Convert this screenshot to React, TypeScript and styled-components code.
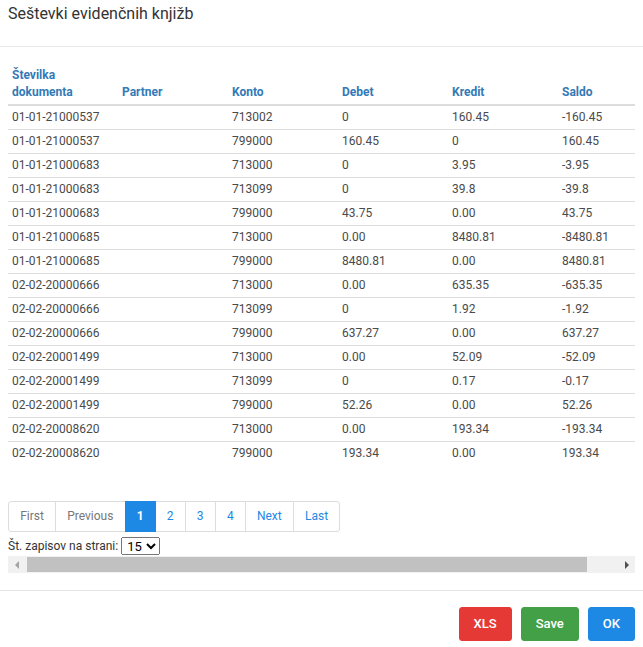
import React from "react";
import styled, { createGlobalStyle } from "styled-components";

const Global = createGlobalStyle`
  html, body { margin: 0; padding: 0; background: #fff; }
  body { font-family: Roboto, "Liberation Sans", Arial, sans-serif; color: #333; }
  * { box-sizing: border-box; }
`;

const Modal = styled.div`
  width: 643px;
  display: flex;
  flex-direction: column;
`;

const Header = styled.div`
  height: 47px;
  padding: 4px 8px 0;
  border-bottom: 1px solid #e9e9e9;
`;

const Title = styled.h4`
  margin: 0;
  font-size: 16px;
  line-height: 20px;
  font-weight: 400;
  color: #333;
`;

const Body = styled.div`
  padding: 17px 8px 17px;
`;

const Viewport = styled.div`
  overflow: hidden;
`;

const Inner = styled.div`
  width: 660px;
`;

const Table = styled.table`
  width: 660px;
  border-collapse: collapse;
  table-layout: fixed;
  font-size: 12px;
  margin-bottom: 36px;
`;

const Th = styled.th`
  width: 110px;
  text-align: left;
  vertical-align: bottom;
  padding: 3px 4px;
  line-height: 17px;
  font-weight: 700;
  color: #337ab7;
  border-bottom: 2px solid #ddd;
`;

const Tr = styled.tr`
  & + & td { border-top: 1px solid #ddd; }
`;

const Td = styled.td`
  padding: 3px 4px;
  line-height: 17px;
  color: #4a4a4a;
  white-space: nowrap;
`;

const Pager = styled.ul`
  display: flex;
  margin: 0;
  padding: 0;
  list-style: none;
`;

const PageItem = styled.li<{ $active?: boolean; $disabled?: boolean }>`
  padding: 6px 11.15px;
  font-size: 12px;
  line-height: 17px;
  border: 1px solid ${(p) => (p.$active ? "#1e88e5" : "#ddd")};
  margin-left: -1px;
  background: ${(p) => (p.$active ? "#1e88e5" : "#fff")};
  color: ${(p) => (p.$active ? "#fff" : p.$disabled ? "#777" : "#1e88e5")};
  font-weight: ${(p) => (p.$active ? 700 : 400)};
  position: relative;
  z-index: ${(p) => (p.$active ? 1 : 0)};
  &:first-child { margin-left: 0; border-radius: 3px 0 0 3px; }
  &:last-child { border-radius: 0 3px 3px 0; }
`;

const PerPage = styled.div`
  display: flex;
  align-items: center;
  gap: 3px;
  margin-top: 5px;
  font-size: 12px;
  line-height: 17px;
  color: #333;
  padding-bottom: 1px;
`;

const Select = styled.select`
  font-family: Roboto, "Liberation Sans", Arial, sans-serif;
  font-size: 13px;
  height: 18px;
  padding: 0 1px;
`;

const ScrollBar = styled.div`
  display: flex;
  align-items: center;
  height: 17px;
  background: #f1f1f1;
`;

const ArrowBtn = styled.div<{ $dir: "left" | "right"; $dim?: boolean }>`
  flex: 0 0 17px;
  height: 17px;
  display: flex;
  align-items: center;
  justify-content: center;
  &::before {
    content: "";
    width: 0;
    height: 0;
    border-top: 4px solid transparent;
    border-bottom: 4px solid transparent;
    ${(p) =>
      p.$dir === "left"
        ? `border-right: 4px solid ${p.$dim ? "#a3a3a3" : "#505050"};`
        : `border-left: 4px solid ${p.$dim ? "#a3a3a3" : "#505050"};`}
  }
`;

const ThumbTrack = styled.div`
  flex: 1;
  height: 17px;
  padding: 1px 2px;
  display: flex;
`;

const Thumb = styled.div`
  height: 15px;
  background: #c1c1c1;
`;

const Footer = styled.div`
  border-top: 1px solid #e5e5e5;
  padding: 16px 8px;
  display: flex;
  justify-content: flex-end;
  gap: 9px;
`;

const Btn = styled.button<{ $bg: string }>`
  font-family: Roboto, "Liberation Sans", Arial, sans-serif;
  font-size: 13px;
  font-weight: 500;
  line-height: 18px;
  padding: 7px 14px;
  color: #fff;
  background: ${(p) => p.$bg};
  border: 1px solid ${(p) => p.$bg};
  border-radius: 3px;
`;

const rows: string[][] = [
  ["01-01-21000537", "713002", "0", "160.45", "-160.45"],
  ["01-01-21000537", "799000", "160.45", "0", "160.45"],
  ["01-01-21000683", "713000", "0", "3.95", "-3.95"],
  ["01-01-21000683", "713099", "0", "39.8", "-39.8"],
  ["01-01-21000683", "799000", "43.75", "0.00", "43.75"],
  ["01-01-21000685", "713000", "0.00", "8480.81", "-8480.81"],
  ["01-01-21000685", "799000", "8480.81", "0.00", "8480.81"],
  ["02-02-20000666", "713000", "0.00", "635.35", "-635.35"],
  ["02-02-20000666", "713099", "0", "1.92", "-1.92"],
  ["02-02-20000666", "799000", "637.27", "0.00", "637.27"],
  ["02-02-20001499", "713000", "0.00", "52.09", "-52.09"],
  ["02-02-20001499", "713099", "0", "0.17", "-0.17"],
  ["02-02-20001499", "799000", "52.26", "0.00", "52.26"],
  ["02-02-20008620", "713000", "0.00", "193.34", "-193.34"],
  ["02-02-20008620", "799000", "193.34", "0.00", "193.34"],
];

const visibleRatio = 627 / 660;

export default function App() {
  return (
    <>
      <Global />
      <Modal>
        <Header>
          <Title>Seštevki evidenčnih knjižb</Title>
        </Header>
        <Body>
          <Viewport>
            <Inner>
              <Table>
                <thead>
                  <tr>
                    <Th>Številka dokumenta</Th>
                    <Th>Partner</Th>
                    <Th>Konto</Th>
                    <Th>Debet</Th>
                    <Th>Kredit</Th>
                    <Th>Saldo</Th>
                  </tr>
                </thead>
                <tbody>
                  {rows.map((r, i) => (
                    <Tr key={i}>
                      <Td>{r[0]}</Td>
                      <Td></Td>
                      <Td>{r[1]}</Td>
                      <Td>{r[2]}</Td>
                      <Td>{r[3]}</Td>
                      <Td>{r[4]}</Td>
                    </Tr>
                  ))}
                </tbody>
              </Table>
              <Pager>
                <PageItem $disabled>First</PageItem>
                <PageItem $disabled>Previous</PageItem>
                <PageItem $active>1</PageItem>
                <PageItem>2</PageItem>
                <PageItem>3</PageItem>
                <PageItem>4</PageItem>
                <PageItem>Next</PageItem>
                <PageItem>Last</PageItem>
              </Pager>
              <PerPage>
                Št. zapisov na strani:
                <Select defaultValue="15">
                  <option>5</option>
                  <option>10</option>
                  <option>15</option>
                  <option>20</option>
                </Select>
              </PerPage>
            </Inner>
          </Viewport>
          <ScrollBar>
            <ArrowBtn $dir="left" $dim />
            <ThumbTrack>
              <Thumb style={{ width: `${visibleRatio * 100}%` }} />
            </ThumbTrack>
            <ArrowBtn $dir="right" />
          </ScrollBar>
        </Body>
        <Footer>
          <Btn $bg="#e53935">XLS</Btn>
          <Btn $bg="#43a047">Save</Btn>
          <Btn $bg="#1e88e5">OK</Btn>
        </Footer>
      </Modal>
    </>
  );
}
